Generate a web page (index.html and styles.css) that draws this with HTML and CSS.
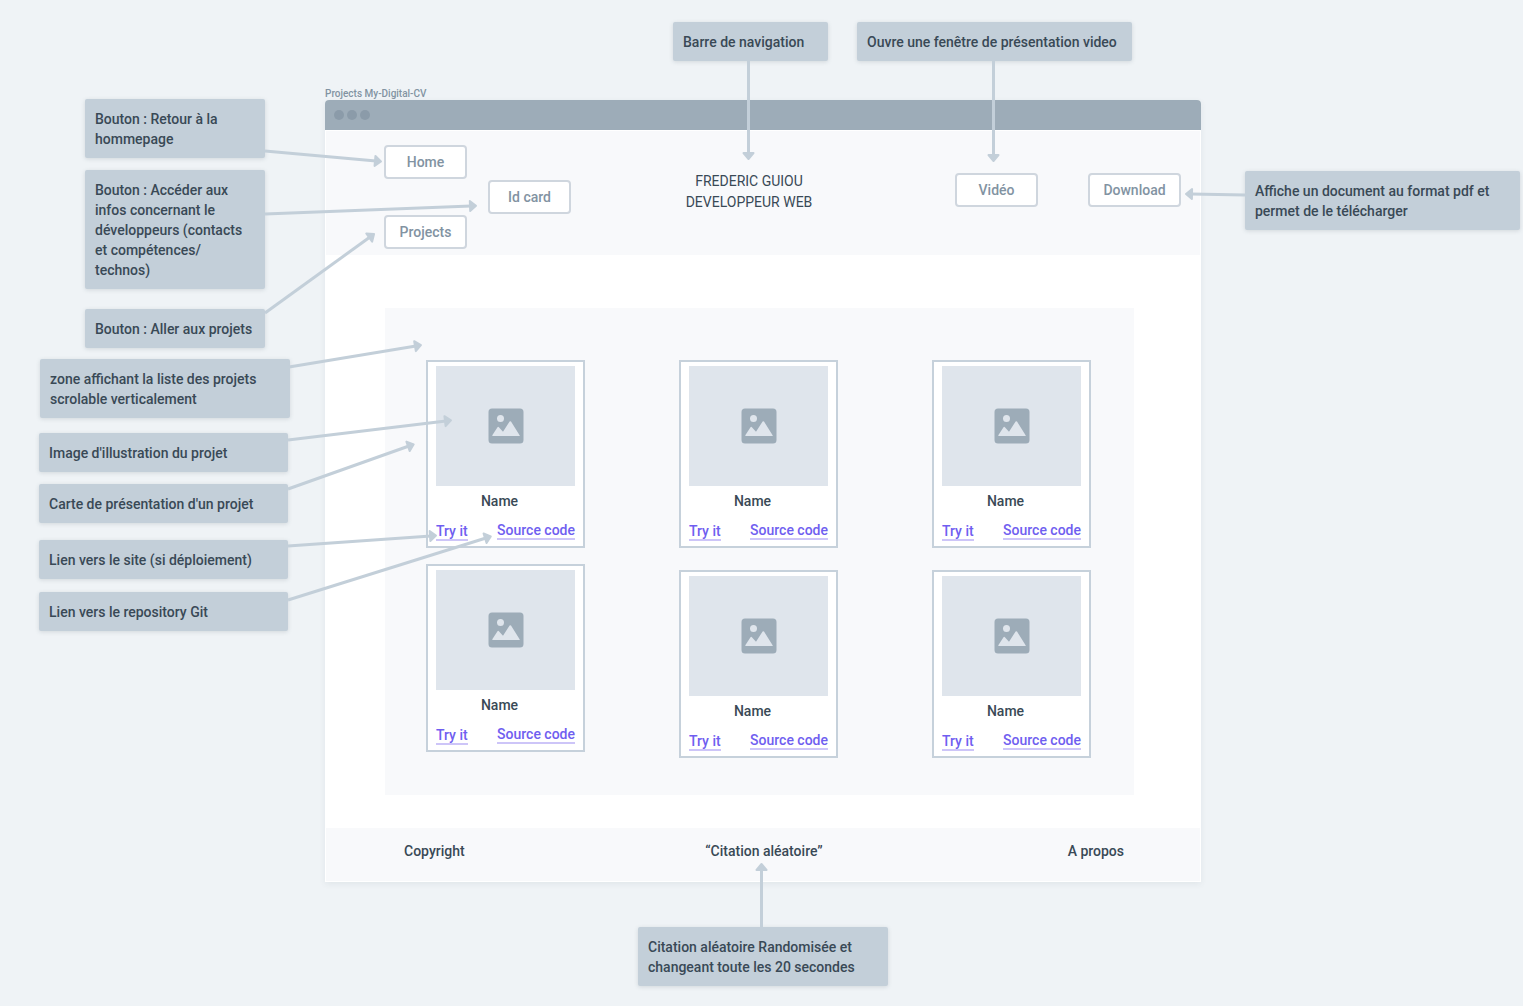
FILE: index.html
```html
<!DOCTYPE html>
<html lang="fr">
<head>
<meta charset="utf-8">
<meta name="viewport" content="width=device-width, initial-scale=1">
<title>Projects My-Digital-CV</title>
<link rel="stylesheet" href="styles.css">
</head>
<body>
<svg class="defs" width="0" height="0" aria-hidden="true">
  <symbol id="picture" viewBox="0 0 36 36">
    <path fill-rule="evenodd" d="M4 0.5H32A3.5 3.5 0 0 1 35.500 4V32A3.500 3.500 0 0 1 32 35.500H4A3.500 3.500 0 0 1 0.500 32V4A3.500 3.500 0 0 1 4 0.500ZM12.500 7A3.500 3.500 0 1 0 12.500 14A3.500 3.500 0 1 0 12.500 7ZM4.800 28H31.200Q32 28 31.600 27.300L23 13.600Q22.300 12.700 21.600 13.600L15 23.800L10.900 19.200Q10.200 18.500 9.500 19.300L4.300 27.200Q4 28 4.800 28Z"/>
  </symbol>
</svg>
<main class="canvas">
  <section class="artboard">
    <h1 class="artboard-name">Projects My-Digital-CV</h1>
    <div class="window">
      <div class="titlebar"><i class="dot"></i><i class="dot"></i><i class="dot"></i></div>
      <header class="header">
        <nav class="nav">
          <div class="nav-main">
            <button class="button" type="button">Home</button>
            <button class="button" type="button">Projects</button>
          </div>
          <button class="button" type="button">Id card</button>
        </nav>
        <p class="identity">FREDERIC GUIOU<br>DEVELOPPEUR WEB</p>
        <div class="actions">
          <button class="button" type="button">Vidéo</button>
          <button class="button button-wide" type="button">Download</button>
        </div>
      </header>
      <div class="content">
        <div class="projects">
          <div class="column column-tight">
            <article class="card"><div class="thumb"><svg class="icon"><use href="#picture"/></svg></div><h2 class="name">Name</h2><div class="links"><a class="link link-try" href="#">Try it</a><a class="link" href="#">Source code</a></div></article>
            <article class="card"><div class="thumb"><svg class="icon"><use href="#picture"/></svg></div><h2 class="name">Name</h2><div class="links"><a class="link link-try" href="#">Try it</a><a class="link" href="#">Source code</a></div></article>
          </div>
          <div class="column">
            <article class="card"><div class="thumb"><svg class="icon"><use href="#picture"/></svg></div><h2 class="name">Name</h2><div class="links"><a class="link link-try" href="#">Try it</a><a class="link" href="#">Source code</a></div></article>
            <article class="card"><div class="thumb"><svg class="icon"><use href="#picture"/></svg></div><h2 class="name">Name</h2><div class="links"><a class="link link-try" href="#">Try it</a><a class="link" href="#">Source code</a></div></article>
          </div>
          <div class="column">
            <article class="card"><div class="thumb"><svg class="icon"><use href="#picture"/></svg></div><h2 class="name">Name</h2><div class="links"><a class="link link-try" href="#">Try it</a><a class="link" href="#">Source code</a></div></article>
            <article class="card"><div class="thumb"><svg class="icon"><use href="#picture"/></svg></div><h2 class="name">Name</h2><div class="links"><a class="link link-try" href="#">Try it</a><a class="link" href="#">Source code</a></div></article>
          </div>
        </div>
      </div>
      <footer class="footer"><span>Copyright</span><span>“Citation aléatoire”</span><span class="about">A propos</span></footer>
    </div>
  </section>

  <p class="note note-navbar">Barre de navigation</p>
  <p class="note note-video">Ouvre une fenêtre de présentation video</p>
  <p class="note note-home">Bouton : Retour à la<br>hommepage</p>
  <p class="note note-card">Bouton : Accéder aux<br>infos concernant le<br>développeurs (contacts<br>et compétences/<br>technos)</p>
  <p class="note note-projects">Bouton : Aller aux projets</p>
  <p class="note note-zone">zone affichant la liste des projets<br>scrolable verticalement</p>
  <p class="note note-image">Image d'illustration du projet</p>
  <p class="note note-presentation">Carte de présentation d'un projet</p>
  <p class="note note-site">Lien vers le site (si déploiement)</p>
  <p class="note note-git">Lien vers le repository Git</p>
  <p class="note note-download">Affiche un document au format pdf et<br>permet de le télécharger</p>
  <p class="note note-quote">Citation aléatoire Randomisée et<br>changeant toute les 20 secondes</p>

  <svg class="arrows" aria-hidden="true">
    <defs>
      <marker id="head" markerUnits="userSpaceOnUse" markerWidth="14" markerHeight="16" refX="3" refY="8" orient="auto" viewBox="0 0 14 16">
        <path d="M2 3L8 8L2 13Z" fill="#c3cfd9" stroke="#c3cfd9" stroke-width="2" stroke-linejoin="round"/>
      </marker>
    </defs>
    <g stroke="#c3cfd9" stroke-width="3" fill="none">
      <path d="M265 151L376 161" marker-end="url(#head)"/>
      <path d="M265 214L471 206" marker-end="url(#head)"/>
      <path d="M265 313L370 237" marker-end="url(#head)"/>
      <path d="M289 367L416 346" marker-end="url(#head)"/>
      <path d="M288 440L446 421" marker-end="url(#head)"/>
      <path d="M288 489L409 446" marker-end="url(#head)"/>
      <path d="M288 546L431 536" marker-end="url(#head)"/>
      <path d="M288 600L486 538" marker-end="url(#head)"/>
      <path d="M748.500 61V154" marker-end="url(#head)"/>
      <path d="M993.500 61V156" marker-end="url(#head)"/>
      <path d="M1245 195L1191 194" marker-end="url(#head)"/>
      <path d="M761.500 927V869" marker-end="url(#head)"/>
    </g>
  </svg>
</main>
</body>
</html>
```
FILE: styles.css
```css
* { box-sizing: border-box; }

body {
  margin: 0;
  background: #eff3f6;
  color: #394956;
  font: 500 14px/20px Roboto, "Liberation Sans", sans-serif;
}

h1, h2, p { margin: 0; font: inherit; }

.defs { position: absolute; }

/* Free canvas holding the mock-up window, its notes and their arrows */
.canvas {
  position: relative;
  min-height: 100vh;
  overflow: hidden;
}

.artboard {
  position: absolute;
  left: 325px;
  top: 88px;
  width: 876px;
}

.artboard-name {
  color: #8293a2;
  font-size: 10px;
  line-height: 12px;
}

.window {
  background: #fff;
  border-radius: 4px 4px 0 0;
  box-shadow: 0 2px 6px rgba(57, 73, 86, 0.08);
}

.titlebar {
  display: flex;
  align-items: center;
  gap: 3px;
  height: 30px;
  padding: 0 9px;
  background: #9dacb8;
  border-radius: 4px 4px 0 0;
}

.dot {
  width: 10px;
  height: 10px;
  border-radius: 50%;
  background: #8b9ba9;
}

.header {
  display: flex;
  align-items: flex-start;
  margin: 1px 1px 0;
  padding: 14px 19px 6px 58px;
  background: #f8f9fb;
}

.nav {
  display: flex;
  align-items: center;
  gap: 21px;
}

.nav-main {
  display: flex;
  flex-direction: column;
  gap: 36px;
}

.button {
  width: 83px;
  height: 34px;
  padding: 0;
  border: 2px solid #cfd6de;
  border-radius: 4px;
  background: #fff;
  color: #8293a2;
  font: inherit;
}

.button-wide { width: 93px; }

.identity {
  flex: 1;
  padding: 26px 28px 0 0;
  font-weight: 400;
  line-height: 21px;
  text-align: center;
}

.actions {
  display: flex;
  gap: 50px;
  padding-top: 28px;
}

.content { padding: 53px 67px 33px 60px; }

.projects {
  display: flex;
  justify-content: space-between;
  padding: 52px 43px 37px 41px;
  background: #f8f9fb;
}

.column {
  display: flex;
  flex-direction: column;
  gap: 22px;
}

.column-tight { gap: 16px; }

.card {
  width: 159px;
  padding: 4px 8px 5px;
  border: 2px solid #c6d1db;
  background: #fff;
}

.thumb {
  display: grid;
  place-items: center;
  height: 120px;
  background: #dfe5ec;
}

.icon {
  width: 36px;
  height: 36px;
  fill: #9dacb8;
}

.name {
  padding: 5px 12px 0 0;
  text-align: center;
}

.links {
  display: flex;
  justify-content: space-between;
  align-items: flex-start;
  padding-top: 11px;
}

.link {
  border-bottom: 2px solid #cdc5f8;
  color: #6f5ef0;
  line-height: 16px;
  text-decoration: none;
}

.link-try { margin-top: 1px; }

.footer {
  display: grid;
  grid-template-columns: 1fr auto 1fr;
  margin: 0 1px;
  padding: 13px 76px 20px 78px;
  border-bottom: 1px solid #fff;
  background: #f8f9fb;
}

.about { text-align: right; }

/* Notes */
.note {
  position: absolute;
  padding: 10px 10px 9px;
  border-radius: 2px;
  background: #c3cfd9;
  box-shadow: 0 1px 4px rgba(57, 73, 86, 0.16);
  white-space: nowrap;
}

.note-navbar { left: 673px; top: 22px; width: 155px; }
.note-video { left: 857px; top: 22px; width: 275px; }
.note-home { left: 85px; top: 99px; width: 180px; }
.note-card { left: 85px; top: 170px; width: 180px; }
.note-projects { left: 85px; top: 309px; width: 180px; }
.note-zone { left: 40px; top: 359px; width: 250px; }
.note-image { left: 39px; top: 433px; width: 249px; }
.note-presentation { left: 39px; top: 484px; width: 249px; }
.note-site { left: 39px; top: 540px; width: 249px; }
.note-git { left: 39px; top: 592px; width: 249px; }
.note-download { left: 1245px; top: 171px; width: 275px; }
.note-quote { left: 638px; top: 927px; width: 250px; }

.arrows {
  position: absolute;
  inset: 0;
  width: 100%;
  height: 100%;
  pointer-events: none;
}
```
